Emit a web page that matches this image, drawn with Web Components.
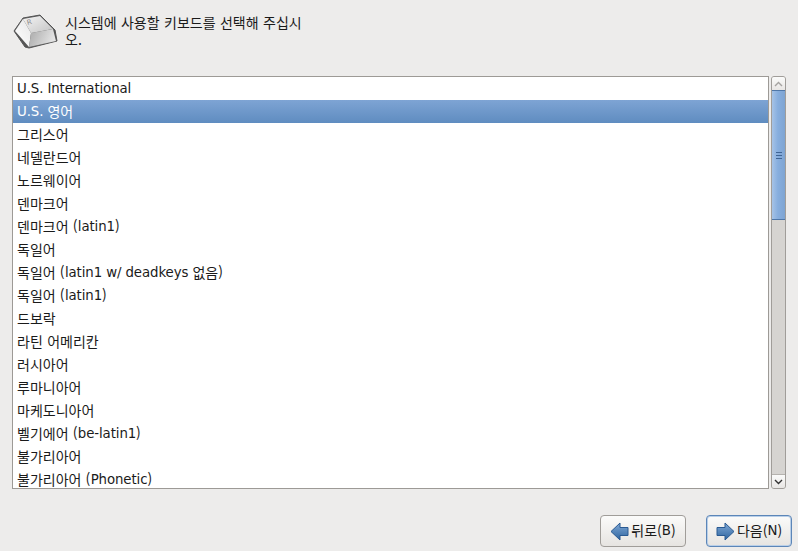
<!DOCTYPE html>
<html lang="ko">
<head>
<meta charset="utf-8">
<title>키보드</title>
<style>
  html, body { margin: 0; height: 100%; background: #edeceb; overflow: hidden; }
  body { font: 13px "DejaVu Sans", "Noto Sans CJK KR", sans-serif; color: #1a1a1a; }
</style>
</head>
<body>
<install-page>
  <page-header slot="header"><ko-text>시스템에 사용할 키보드를 선택해 주십시오.</ko-text></page-header>
  <key-list slot="list">
    <key-item>U.S. International</key-item>
    <key-item selected>U.S. <ko-text>영어</ko-text></key-item>
    <key-item><ko-text>그리스어</ko-text></key-item>
    <key-item><ko-text>네델란드어</ko-text></key-item>
    <key-item><ko-text>노르웨이어</ko-text></key-item>
    <key-item><ko-text>덴마크어</ko-text></key-item>
    <key-item><ko-text>덴마크어</ko-text> <ko-text p>(</ko-text>latin1<ko-text p>)</ko-text></key-item>
    <key-item><ko-text>독일어</ko-text></key-item>
    <key-item><ko-text>독일어</ko-text> <ko-text p>(</ko-text>latin1 w/ deadkeys <ko-text>없음</ko-text><ko-text p>)</ko-text></key-item>
    <key-item><ko-text>독일어</ko-text> <ko-text p>(</ko-text>latin1<ko-text p>)</ko-text></key-item>
    <key-item><ko-text>드보락</ko-text></key-item>
    <key-item><ko-text>라틴 어메리칸</ko-text></key-item>
    <key-item><ko-text>러시아어</ko-text></key-item>
    <key-item><ko-text>루마니아어</ko-text></key-item>
    <key-item><ko-text>마케도니아어</ko-text></key-item>
    <key-item><ko-text>벨기에어</ko-text> <ko-text p>(</ko-text>be-latin1<ko-text p>)</ko-text></key-item>
    <key-item><ko-text>불가리아어</ko-text></key-item>
    <key-item><ko-text>불가리아어</ko-text> <ko-text p>(</ko-text>Phonetic<ko-text p>)</ko-text></key-item>
  </key-list>
  <nav-button slot="footer" dir="back"><ko-text>뒤로(</ko-text>B<ko-text>)</ko-text></nav-button>
  <nav-button slot="footer" dir="next" focused><ko-text>다음(</ko-text>N<ko-text>)</ko-text></nav-button>
</install-page>

<script>
class InstallPage extends HTMLElement {
  constructor() {
    super();
    this.attachShadow({ mode: "open" });
    this.shadowRoot.innerHTML = `
      <style>
        :host { display: flex; flex-direction: column; height: 551px; box-sizing: border-box; padding: 14px 6px 4px 12px; }
        .middle { display: flex; flex: none; height: 413px; margin-top: 28px; padding-right: 6px; gap: 2px; }
        .footer { display: flex; justify-content: flex-end; gap: 20px; margin-top: 26px; }
        ::slotted(key-list) { flex: 1; min-width: 0; }
      </style>
      <slot name="header"></slot>
      <div class="middle">
        <slot name="list"></slot>
        <scroll-bar></scroll-bar>
      </div>
      <div class="footer"><slot name="footer"></slot></div>
    `;
  }
}

// korean runs: the original font has a wider hangul than Noto at the same size
// no whitespace around the slot, it would show up as a space in the line
class KoText extends HTMLElement {
  constructor() {
    super();
    this.attachShadow({ mode: "open" });
    this.shadowRoot.innerHTML = `<style>
      :host { display: inline; font-family: "Noto Sans CJK KR", sans-serif; font-size: 14px; line-height: 1; vertical-align: -1px; word-spacing: .5px; letter-spacing: 0; }
      :host([p]) { letter-spacing: .4px; vertical-align: baseline; }
    </style><slot></slot>`;
  }
}

class PageHeader extends HTMLElement {
  constructor() {
    super();
    this.attachShadow({ mode: "open" });
    this.shadowRoot.innerHTML = `
      <style>
        :host { display: flex; gap: 3px; height: 34px; align-items: flex-start; }
        svg { flex: none; }
        p { margin: 0; width: 238px; line-height: 17px; font-size: 13px; word-break: break-all; }
      </style>
      <svg width="50" height="36" viewBox="0 0 50 36">
        <defs>
          <linearGradient id="top" x1="0" y1="0" x2="1" y2="1"><stop offset="0" stop-color="#f4f4f4"/><stop offset="1" stop-color="#c4c4c4"/></linearGradient>
          <linearGradient id="front" x1="0" y1="0" x2="1" y2="0.3"><stop offset="0" stop-color="#a8a8a8"/><stop offset="1" stop-color="#e4e4e4"/></linearGradient>
          <linearGradient id="left" x1="1" y1="0" x2="0" y2="1"><stop offset="0" stop-color="#e8e8e8"/><stop offset="1" stop-color="#ffffff"/></linearGradient>
        </defs>
        <path d="M2 17 L11 4 L28 1 L43 16 L45 27 L17 34 L13 33 Z" fill="#555" stroke="#555" stroke-width="1" stroke-linejoin="round"/>
        <path d="M11 5 L19 19 L17 33 L3 17 Z" fill="url(#left)"/>
        <path d="M19 19 L41 15 L44 27 L17 33 Z" fill="url(#front)"/>
        <path d="M11 5 L28 2 L41 15 L19 19 Z" fill="url(#top)"/>
        <text x="0" y="0" transform="translate(15.5 11) rotate(-14)" font-family="DejaVu Sans" font-size="7" fill="#8a8a8a">R</text>
      </svg>
      <p><slot></slot></p>
    `;
  }
}

class KeyList extends HTMLElement {
  constructor() {
    super();
    this.attachShadow({ mode: "open" });
    this.shadowRoot.innerHTML = `
      <style>
        :host { display: block; box-sizing: border-box; height: 413px; background: #fff; border: 1px solid #9d9a96; overflow: hidden; }
      </style>
      <slot></slot>
    `;
  }
}

class KeyItem extends HTMLElement {
  constructor() {
    super();
    this.attachShadow({ mode: "open" });
    this.shadowRoot.innerHTML = `<style>
        :host { display: block; height: 23px; line-height: 23px; padding-left: 4px; font-size: 13.33px; letter-spacing: -.1px; white-space: nowrap; color: #1a1a1a; overflow: hidden; }
        :host([selected]) { color: #fff; background: linear-gradient(#7ea4d4, #5f8cc0); }
      </style><slot></slot>`;
  }
}

class ScrollBar extends HTMLElement {
  constructor() {
    super();
    this.attachShadow({ mode: "open" });
    this.shadowRoot.innerHTML = `
      <style>
        :host { display: flex; flex-direction: column; flex: none; width: 15px; height: 413px; box-sizing: border-box; background: #d6d4d1; border: 1px solid #a09d99; border-radius: 3px; overflow: hidden; }
        .step { flex: none; height: 13px; background: linear-gradient(#fbfbfa, #e8e6e4); display: flex; align-items: center; justify-content: center; }
        .thumb { flex: none; height: 130px; box-sizing: border-box; margin: 0 -1px; background: linear-gradient(90deg, #a6c3e6, #87aede 45%, #7ea4d2); border: 1px solid #4f77a8; display: flex; align-items: center; justify-content: center; }
        .track { flex: 1; border-bottom: 1px solid #b5b2ae; }
      </style>
      <div class="step"><svg width="9" height="6" viewBox="0 0 9 6"><path d="M1 5 L4.5 1.5 L8 5" fill="none" stroke="#a5a3a0" stroke-width="1.4"/></svg></div>
      <div class="thumb"><svg width="6" height="8" viewBox="0 0 6 8"><path d="M0 1.5H6M0 4.5H6M0 7.5H6" stroke="#3f6595" stroke-width="1"/></svg></div>
      <div class="track"></div>
      <div class="step"><svg width="9" height="6" viewBox="0 0 9 6"><path d="M1 1 L4.5 4.5 L8 1" fill="none" stroke="#333" stroke-width="1.4"/></svg></div>
    `;
  }
}

class NavButton extends HTMLElement {
  constructor() {
    super();
    this.attachShadow({ mode: "open" });
    const back = this.getAttribute("dir") === "back";
    const arrow = back ? "M1 9.5 L10 1 V5.5 H18 V13.5 H10 V18 Z" : "M18 9.5 L9 1 V5.5 H1 V13.5 H9 V18 Z";
    this.shadowRoot.innerHTML = `
      <style>
        :host { display: flex; align-items: center; justify-content: center; gap: 2px; box-sizing: border-box; width: 86px; height: 32px; border: 1px solid #a09d99; border-radius: 4px; background: linear-gradient(#fbfbfa, #e6e4e1); font-size: 13.33px; color: #1a1a1a; }
        :host([focused]) { border-color: #5c86b8; box-shadow: inset 0 0 0 1px #b9cfe8; }
        svg { flex: none; }
        span { margin-bottom: 1px; }
      </style>
      <svg width="19" height="19" viewBox="0 0 19 19">
        <defs><linearGradient id="a" x1="0" y1="0" x2="0" y2="1"><stop offset="0" stop-color="#7fa8d6"/><stop offset="1" stop-color="#2f659f"/></linearGradient></defs>
        <path d="${arrow}" fill="url(#a)" stroke="#2a5a92" stroke-width="1" stroke-linejoin="round"/>
      </svg>
      <span><slot></slot></span>
    `;
  }
}

customElements.define("install-page", InstallPage);
customElements.define("ko-text", KoText);
customElements.define("page-header", PageHeader);
customElements.define("key-list", KeyList);
customElements.define("key-item", KeyItem);
customElements.define("scroll-bar", ScrollBar);
customElements.define("nav-button", NavButton);
</script>
</body>
</html>
